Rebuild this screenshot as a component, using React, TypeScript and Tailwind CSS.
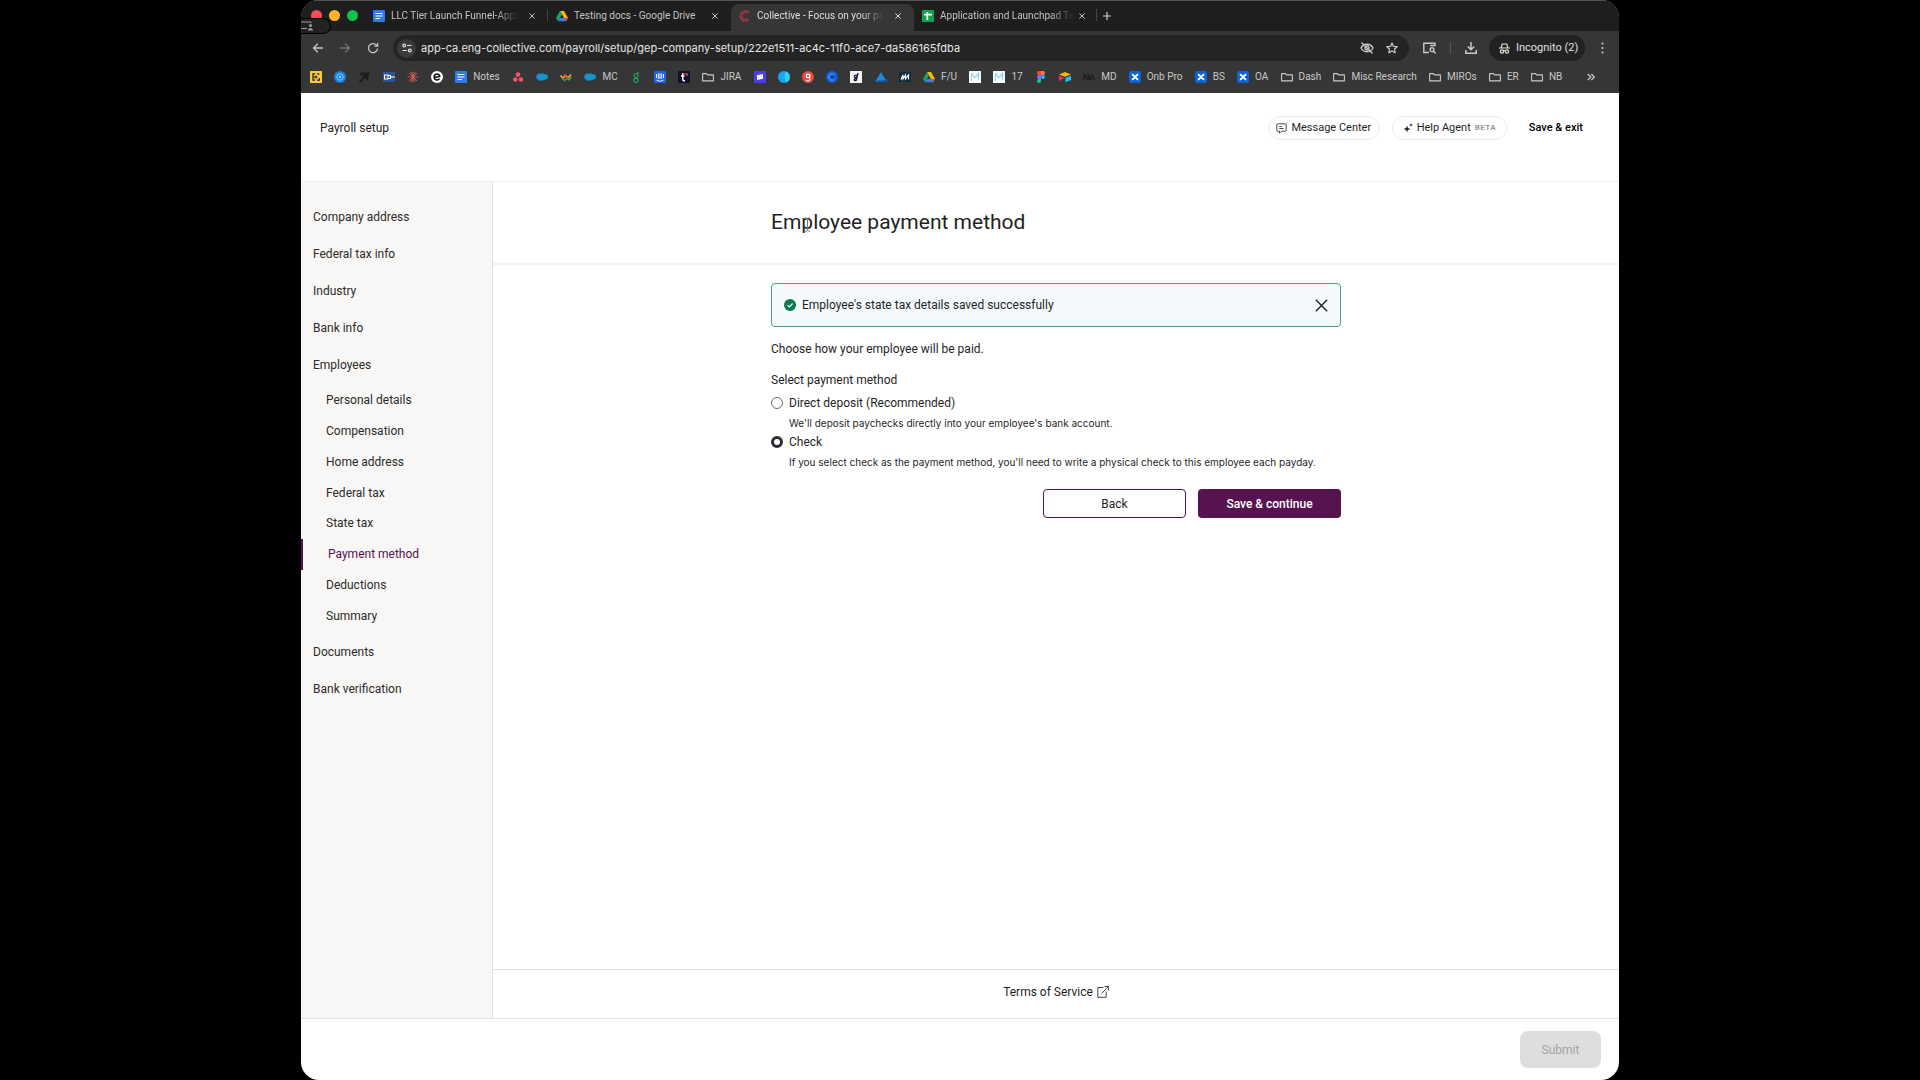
import React, { useState } from 'react';

type IconName =
  | 'docs' | 'gold' | 'atom' | 'arrow' | 'plug' | 'burst' | 'e' | 'asana' | 'cloud' | 'waves' | 'g' | 'intercom' | 't'
  | 'folder' | 'purple' | 'orb' | 'redg' | 'blueC' | 'script' | 'peak' | 'navy' | 'drive' | 'm' | 'figma' | 'box'
  | 'slashes' | 'xblue' | 'sheets' | 'collective';

const SmallIcon: React.FC<{ name: IconName }> = ({ name }) => {
  const shapes: Record<IconName, React.ReactNode> = {
    docs: (
      <>
        <rect width="12" height="12" rx="1" fill="#2f7de1" />
        <path d="M2.5 3.5h7M2.5 6h7M2.5 8.5h4.5" stroke="#fff" strokeWidth="1.2" />
      </>
    ),
    gold: (
      <>
        <rect width="12" height="12" fill="#f6c83c" />
        <path d="M5 2.8H3v6.4h2M7 2.8h2.4M7 9.2h2.4V7M3 6h4.5M6 4.5v3" stroke="#222" strokeWidth="1.2" fill="none" />
      </>
    ),
    atom: (
      <>
        <circle cx="6" cy="6" r="6" fill="#1682ea" />
        <circle cx="6" cy="6" r="3.2" stroke="#8fd0ff" strokeWidth="0.9" fill="none" />
        <circle cx="6" cy="6" r="1.2" fill="#9fd8ff" />
      </>
    ),
    arrow: <path d="M2.500 1.500h9l-2 8.500-2-3.500-4.500 5H.5l5.500-7-4.500-.5z" fill="#1c1c1c" />,
    plug: (
      <>
        <rect y="1" width="12" height="10" fill="#2b529c" />
        <path d="M1.5 4h3.5v4H1.5zM5 4.5h2.5v3H5M7.5 6H12" stroke="#fff" strokeWidth="1.1" fill="none" />
      </>
    ),
    burst: (
      <path d="M6 .5v11M.5 6h11M2 2l8 8M10 2 2 10M3.800.9l4.400 10.200M8.200.9 3.800 11.100" stroke="#e0654f" strokeWidth="0.8" />
    ),
    e: (
      <>
        <circle cx="6" cy="6" r="6" fill="#fff" />
        <path d="M3.3 6.4 8.8 5.4C8.4 3.6 7.3 3 6 3 4.300 3 3.200 4.300 3.200 6s1.100 3 2.900 3c1.100 0 2-.5 2.500-1.400" stroke="#111" strokeWidth="1.5" fill="none" />
      </>
    ),
    asana: (
      <>
        <circle cx="6" cy="3.600" r="2.300" fill="#f0566a" />
        <circle cx="3.300" cy="8.500" r="2.300" fill="#f0566a" />
        <circle cx="8.900" cy="8.500" r="2.300" fill="#f0566a" />
      </>
    ),
    cloud: <path d="M1 4.200C1.500 2.300 4 2 5 3c1-1 2.800-.8 3.400.3C10.500 2.800 12 4.200 12 6S10.500 8.600 9 8.400C8 9.600 6.500 9.500 6 9 5 10.500 3 10.300 2.500 8.600.5 8.500-.5 5.500 1 4.200z" fill="#1593d2" />,
    waves: (
      <>
        <path d="M.5 4.500 3 7l2.500-2.500L8 7l3-3.500" stroke="#f2a33a" strokeWidth="1.700" fill="none" />
        <path d="M2 7l2.500 2.500L7 7l2 2 2.500-3" stroke="#2fa866" strokeWidth="1.500" fill="none" />
        <path d="M4 3.500 8.500 8" stroke="#e5483f" strokeWidth="1.500" />
      </>
    ),
    g: (
      <>
        <circle cx="6" cy="4.500" r="2" stroke="#23a36a" strokeWidth="1.200" fill="none" />
        <circle cx="6" cy="9.300" r="2.200" stroke="#23a36a" strokeWidth="1.200" fill="none" />
        <path d="M7.500 3 8.500.8" stroke="#23a36a" strokeWidth="1.200" />
      </>
    ),
    intercom: (
      <>
        <rect width="12" height="12" rx="1.500" fill="#1f62f0" />
        <path d="M2.500 3v4M4.300 2.500v5.300M6 2.300v5.700M7.700 2.500v5.300M9.500 3v4M2.500 9c2 1.500 5 1.500 7 0" stroke="#fff" strokeWidth="0.900" fill="none" />
      </>
    ),
    t: (
      <>
        <rect width="12" height="12" rx="1" fill="#160d33" />
        <path d="M4.800 2v6.500c0 1 .8 1.400 2.200 1.200M3 5h3.500" stroke="#fff" strokeWidth="1.500" fill="none" />
        <path d="M6.500 2.800H9V5" stroke="#f0503c" strokeWidth="1.300" fill="none" />
      </>
    ),
    folder: <path d="M.6 2.600h3.800l1.200 1.300h5.800v6H.6z" stroke="#c9c9c9" strokeWidth="1.100" strokeLinejoin="round" fill="none" />,
    purple: (
      <>
        <rect width="12" height="12" fill="#4b3cf0" />
        <path d="M3 4.200 9 3v4.800L3 9z" fill="#fff" />
      </>
    ),
    orb: (
      <>
        <circle cx="6" cy="6" r="6" fill="#15a5f2" />
        <path d="M8 .5a6 6 0 0 1 1 10.700C6 9 6 4 8 .5z" fill="#2fd0ee" />
      </>
    ),
    redg: (
      <>
        <circle cx="6" cy="6" r="6" fill="#ee4742" />
        <circle cx="6" cy="4.900" r="1.700" stroke="#fff" strokeWidth="1.200" fill="none" />
        <path d="M7.800 3v5.200c0 2-2.900 2.200-3.700.8" stroke="#fff" strokeWidth="1.200" fill="none" />
      </>
    ),
    blueC: (
      <>
        <circle cx="6" cy="6" r="6" fill="#0d62d9" />
        <path d="M8.500 4.200A3.200 3.200 0 1 0 8.500 7.800" stroke="#5aa5ff" strokeWidth="1" fill="none" />
        <circle cx="6.300" cy="6" r="1.200" stroke="#0a2a5c" strokeWidth="1" fill="none" />
      </>
    ),
    script: (
      <>
        <rect width="12" height="12" fill="#f2f2f4" />
        <path d="M8 2 6.500 8.500c-.3 1.500-2.500 1.500-2.300.2.200-1 2-1.500 3.300-2M7 4.500c-1.500-.8-3 .3-2.500 1.500s1.800.6 2.500-.5" stroke="#14182c" strokeWidth="1.300" fill="none" />
      </>
    ),
    peak: (
      <>
        <path d="M6 1 12 11H0z" fill="#1f87e0" />
        <path d="M0 11c3-3 6 0 12-3v3z" fill="#0c58b0" />
      </>
    ),
    navy: (
      <>
        <rect y="1" width="12" height="10" fill="#0c2c42" />
        <path d="M2 8.500 4 4v4l2.500-4v4L9.500 4v4.500" stroke="#fff" strokeWidth="1.200" fill="none" />
      </>
    ),
    drive: (
      <>
        <path d="M4 1h4l4 7H8z" fill="#fbbc04" />
        <path d="M4 1 0 8l2 3.300L6 4.500z" fill="#1ea362" />
        <path d="M4 8h8l-2 3.300H2z" fill="#3d7cf0" />
        <path d="M10 11.300 12 8H9z" fill="#ea4335" />
      </>
    ),
    m: (
      <>
        <rect width="12" height="12" fill="#f5fafc" />
        <path d="M2.500 9.500v-7L6 6.500l3.500-4v7" stroke="#6db7d8" strokeWidth="1.200" strokeDasharray="1.200 .7" fill="none" />
      </>
    ),
    figma: (
      <>
        <path d="M6 0H4a2 2 0 0 0 0 4h2z" fill="#f24e1e" />
        <path d="M6 0h2a2 2 0 0 1 0 4H6z" fill="#ff7262" />
        <path d="M6 4H4a2 2 0 0 0 0 4h2z" fill="#a259ff" />
        <circle cx="8" cy="6" r="2" fill="#1abcfe" />
        <path d="M6 8H4a2 2 0 1 0 2 2z" fill="#0acf83" />
      </>
    ),
    box: (
      <>
        <path d="M0 3.500 6 1l6 2.500-6 2.300z" fill="#fcb400" />
        <path d="M6.500 6.800 12 4.700V9l-5.500 2.200z" fill="#18bfff" />
        <path d="M0 4.800 5.500 7 0 10z" fill="#f82b60" />
      </>
    ),
    slashes: <path d="M1 3l4 6M4.500 3l4 6M8 3l4 6M1 5v4M6 6v3" stroke="#1c1c1c" strokeWidth="1.400" />,
    xblue: (
      <>
        <rect width="12" height="12" rx="2" fill="#0b63d6" />
        <path d="M2.800 3.500C5 3.500 7 8.500 9.300 8.500M9.300 3.500C7 3.500 5 8.500 2.800 8.500" stroke="#fff" strokeWidth="1.900" fill="none" />
      </>
    ),
    sheets: (
      <>
        <rect width="12" height="12" rx="1" fill="#12a150" />
        <path d="M2.200 4.700h7.600M5.300 2v8" stroke="#fff" strokeWidth="1.700" />
      </>
    ),
    collective: (
      <>
        <path d="M9.700 2.600A4.800 4.800 0 1 0 9.700 9.400" stroke="#d6344f" strokeWidth="2" strokeDasharray="1.200 .6" fill="none" />
        <path d="M8.200 4A2.800 2.800 0 1 0 8.200 8" stroke="#d6344f" strokeWidth="1" strokeDasharray=".9 .6" fill="none" />
      </>
    ),
  };
  return (
    <svg className="h-3 w-3 shrink-0" viewBox="0 0 12 12" fill="none" aria-hidden="true">
      {shapes[name]}
    </svg>
  );
};

const tabs: { icon: IconName; title: string; active?: boolean; divider?: boolean; fade?: boolean }[] = [
  { icon: 'docs', title: 'LLC Tier Launch Funnel-Appl', divider: true, fade: true },
  { icon: 'drive', title: 'Testing docs - Google Drive' },
  { icon: 'collective', title: 'Collective - Focus on your pa', active: true, fade: true },
  { icon: 'sheets', title: 'Application and Launchpad Te', divider: true, fade: true },
];

const bookmarks: { icon: IconName; label?: string }[] = [
  { icon: 'gold' }, { icon: 'atom' }, { icon: 'arrow' }, { icon: 'plug' }, { icon: 'burst' }, { icon: 'e' },
  { icon: 'docs', label: 'Notes' }, { icon: 'asana' }, { icon: 'cloud' }, { icon: 'waves' },
  { icon: 'cloud', label: 'MC' }, { icon: 'g' }, { icon: 'intercom' }, { icon: 't' },
  { icon: 'folder', label: 'JIRA' }, { icon: 'purple' }, { icon: 'orb' }, { icon: 'redg' }, { icon: 'blueC' },
  { icon: 'script' }, { icon: 'peak' }, { icon: 'navy' }, { icon: 'drive', label: 'F/U' }, { icon: 'm' },
  { icon: 'm', label: '17' }, { icon: 'figma' }, { icon: 'box' }, { icon: 'slashes', label: 'MD' },
  { icon: 'xblue', label: 'Onb Pro' }, { icon: 'xblue', label: 'BS' }, { icon: 'xblue', label: 'OA' },
  { icon: 'folder', label: 'Dash' }, { icon: 'folder', label: 'Misc Research' }, { icon: 'folder', label: 'MIROs' },
  { icon: 'folder', label: 'ER' }, { icon: 'folder', label: 'NB' },
];

const steps: { label: string; children?: string[] }[] = [
  { label: 'Company address' },
  { label: 'Federal tax info' },
  { label: 'Industry' },
  { label: 'Bank info' },
  {
    label: 'Employees',
    children: ['Personal details', 'Compensation', 'Home address', 'Federal tax', 'State tax', 'Payment method', 'Deductions', 'Summary'],
  },
  { label: 'Documents' },
  { label: 'Bank verification' },
];

const methods = [
  { id: 'deposit', label: 'Direct deposit (Recommended)', hint: "We'll deposit paychecks directly into your employee's bank account." },
  { id: 'check', label: 'Check', hint: "If you select check as the payment method, you'll need to write a physical check to this employee each payday." },
];

const CloseIcon: React.FC<{ className: string }> = ({ className }) => (
  <svg className={className} viewBox="0 0 12 12" fill="none" stroke="currentColor" aria-hidden="true">
    <path d="M.8.8l10.400 10.400M11.200.8.8 11.200" />
  </svg>
);

const TabStrip = () => (
  <div className="flex h-[31px] bg-[#1e1e1e] pl-[10px] shadow-[inset_0_1px_0_#555]">
    <div className="flex w-[54px] shrink-0 items-center gap-[7px] pb-px">
      <span className="h-[11px] w-[11px] rounded-full bg-[#ff4b55]" />
      <span className="h-[11px] w-[11px] rounded-full bg-[#fdb32b]" />
      <span className="h-[11px] w-[11px] rounded-full bg-[#0fbf4f]" />
    </div>
    {tabs.map((tab) => (
      <div
        key={tab.title}
        className={`relative mt-1 flex w-[183px] shrink-0 items-center pr-2 pb-1 pl-2 ${tab.active ? 'rounded-t-lg bg-[#363636] text-[#dedede]' : 'text-[#c4c4c4]'}`}
      >
        <SmallIcon name={tab.icon} />
        <span className={`ml-[6px] text-[10px] leading-4 whitespace-nowrap ${tab.fade ? 'mask-r-from-82% mask-r-to-100%' : ''}`}>{tab.title}</span>
        <button type="button" aria-label={`Close ${tab.title}`} className="ml-auto flex h-4 w-4 items-center justify-center">
          <CloseIcon className="h-[6px] w-[6px] stroke-2" />
        </button>
        {tab.divider && <span className="absolute top-[5px] right-0 h-3 w-px bg-[#444]" />}
      </div>
    ))}
    <button type="button" aria-label="New tab" className="flex w-5 items-center justify-center text-[#d0d0d0]">
      <svg className="h-2 w-2" viewBox="0 0 8 8" stroke="currentColor" strokeWidth="1.200" aria-hidden="true">
        <path d="M4 0v8M0 4h8" />
      </svg>
    </button>
  </div>
);

const AddressBar = () => (
  <div className="flex h-[34px] items-center pr-[15px] pl-[11px] text-[#c9c9c9]">
    <button type="button" aria-label="Back" className="mr-[15px]">
      <svg className="h-3 w-3" viewBox="0 0 12 12" fill="none" stroke="currentColor" strokeWidth="1.300" aria-hidden="true"><path d="M11 6H1.800M5.800 1.700 1.500 6l4.300 4.300" /></svg>
    </button>
    <button type="button" aria-label="Forward" className="mr-4 text-[#757575]">
      <svg className="h-3 w-3" viewBox="0 0 12 12" fill="none" stroke="currentColor" strokeWidth="1.300" aria-hidden="true"><path d="M1 6h9.200M6.200 1.700 10.500 6l-4.300 4.300" /></svg>
    </button>
    <button type="button" aria-label="Reload" className="mr-[14px]">
      <svg className="h-3 w-3" viewBox="0 0 12 12" fill="none" stroke="currentColor" strokeWidth="1.300" aria-hidden="true"><path d="M10.500 6.500A4.500 4.500 0 1 1 9.200 2.900L10.500 4M10.600 1v3.200H7.400" /></svg>
    </button>
    <div className="flex h-[26px] flex-1 items-center rounded-full bg-[#242424] pr-[11px] pl-1">
      <span className="mr-[5px] flex h-[19px] w-[19px] items-center justify-center rounded-full bg-[#3a3a3a]">
        <svg className="h-[10px] w-[10px]" viewBox="0 0 10 10" fill="none" stroke="#e0e0e0" strokeWidth="1.200" aria-hidden="true"><path d="M5 2.500h4.500M.5 7.500H5" /><circle cx="2.200" cy="2.500" r="1.400" /><circle cx="7.800" cy="7.500" r="1.400" /></svg>
      </span>
      <input
        aria-label="Address"
        className="h-5 min-w-0 flex-1 bg-transparent font-['Inter',sans-serif] text-[11px] text-[#e6e6e6] outline-none"
        defaultValue="app-ca.eng-collective.com/payroll/setup/gep-company-setup/222e1511-ac4c-11f0-ace7-da586165fdba"
      />
      <svg className="mr-3 h-[14px] w-[14px]" viewBox="0 0 14 14" fill="none" stroke="currentColor" strokeWidth="1.300" aria-hidden="true"><path d="M1 7c2.500-5 9.500-5 12 0-2.500 5-9.500 5-12 0zM1.500 1.500l11 11" /><circle cx="7" cy="7" r="2" /></svg>
      <svg className="h-3 w-3" viewBox="0 0 12 12" fill="none" stroke="currentColor" strokeWidth="1.200" strokeLinejoin="round" aria-hidden="true"><path d="m6 1 1.500 3.400 3.700.3-2.800 2.500.8 3.600L6 8.900l-3.200 1.900.8-3.600L.8 4.700l3.700-.3z" /></svg>
    </div>
    <svg className="ml-[14px] h-3 w-[13px]" viewBox="0 0 13 12" fill="none" stroke="currentColor" strokeWidth="1.400" aria-hidden="true"><path d="M6 10.500H3M12 4.300v-3H.8v9.200H5" /><path d="M7 3.500h5" /><circle cx="9" cy="7.700" r="1.900" /><path d="m10.400 9.200 2.200 2.300" /></svg>
    <span className="mx-[14px] h-3 w-px bg-[#585858]" />
    <svg className="mr-3 h-3 w-3" viewBox="0 0 12 12" fill="none" stroke="currentColor" strokeWidth="1.500" aria-hidden="true"><path d="M6 0v7.500M2.800 4.500 6 7.700l3.200-3.200M.8 8v3.200h10.400V8" /></svg>
    <div className="flex h-[26px] w-24 items-center gap-[6px] rounded-full bg-[#222] pl-[10px] text-[11px] whitespace-nowrap text-[#e0e0e0]">
      <svg className="h-[11px] w-[11px]" viewBox="0 0 11 11" fill="none" stroke="currentColor" strokeWidth="1.200" aria-hidden="true"><path d="M0 5h11M2.300 4.700 3.200 1h4.600l.9 3.700M4.700 8.200c.5-.5 1.100-.5 1.600 0" /><circle cx="3" cy="8.500" r="1.600" /><circle cx="8" cy="8.500" r="1.600" /></svg>
      Incognito (2)
    </div>
    <button type="button" aria-label="Menu" className="ml-4">
      <svg className="h-3 w-[3px]" viewBox="0 0 3 12" fill="currentColor" aria-hidden="true"><circle cx="1.500" cy="1.500" r="1.100" /><circle cx="1.500" cy="6" r="1.100" /><circle cx="1.500" cy="10.500" r="1.100" /></svg>
    </button>
  </div>
);

const BookmarksBar = () => (
  <div className="flex h-7 items-start justify-between pt-1 pr-6 pl-[9px] text-[10px] leading-4 text-[#c9c9c9]">
    {bookmarks.map((b, i) => (
      <a key={i} href="#" aria-label={b.label ? undefined : b.icon} className="flex h-4 items-center gap-[6px] whitespace-nowrap">
        <SmallIcon name={b.icon} />
        {b.label}
      </a>
    ))}
    <button type="button" aria-label="More bookmarks" className="ml-3 flex h-4 items-center">
      <svg className="h-2 w-2" viewBox="0 0 8 8" fill="none" stroke="currentColor" strokeWidth="1.200" aria-hidden="true"><path d="m.8 1 3 3-3 3M4.300 1l3 3-3 3" /></svg>
    </button>
  </div>
);

const Sidebar = () => (
  <nav className="w-48 shrink-0 border-r border-[#e2e1e0] bg-[#f8f7f5] pt-4 text-xs text-[#2b2b2b]">
    <ul>
      {steps.map((step) => (
        <li key={step.label}>
          <a href="#" className="flex h-[37px] items-center pl-3">{step.label}</a>
          {step.children && (
            <ul className="my-[2px] flex h-[246px] flex-col">
              {step.children.map((child) => (
                <li key={child} className="flex flex-1">
                  <a
                    href="#"
                    className={`flex flex-1 items-center pl-[25px] ${child === 'Payment method' ? 'border-l-2 border-[#57134f] text-[#57134f]' : ''}`}
                  >
                    {child}
                  </a>
                </li>
              ))}
            </ul>
          )}
        </li>
      ))}
    </ul>
  </nav>
);

const App: React.FC = () => {
  const [method, setMethod] = useState('check');
  const [showAlert, setShowAlert] = useState(true);

  return (
    <div className="min-h-screen bg-black px-[301px] font-['Roboto',sans-serif]">
      <div className="relative flex min-h-screen flex-col overflow-hidden rounded-[18px] bg-white">
        <div className="bg-[#363636]">
          <TabStrip />
          <AddressBar />
          <BookmarksBar />
        </div>
        {/* screen sharing indicator */}
        <div className="absolute top-[18px] left-0 flex h-4 w-[30px] items-center rounded-r-full border border-l-0 border-black bg-[#222]">
          <svg className="h-[10px] w-3" viewBox="0 0 12 10" fill="none" stroke="#999" aria-hidden="true"><path d="M0 1h10v1M0 7.500h6" /><circle cx="9.500" cy="4.500" r="1.500" fill="#999" stroke="none" /><path d="M7 9.500c0-3.500 5-3.500 5 0z" fill="#999" stroke="none" /></svg>
        </div>

        <div className="flex flex-1 flex-col text-[#1f1f1f]">
          <header className="flex h-[89px] items-start justify-between border-b border-[#f1f0ee] pt-[23px] pr-9 pl-[19px]">
            <h2 className="text-xs leading-6">Payroll setup</h2>
            <div className="flex items-center text-[11px]">
              <button type="button" className="mr-3 flex h-6 w-28 items-center justify-center gap-1 rounded-full border border-[#ebebeb]">
                <svg className="h-[11px] w-[11px]" viewBox="0 0 11 11" fill="none" stroke="#333" strokeWidth="0.900" aria-hidden="true"><path d="M1.500.8h8c.4 0 .7.3.7.7v6c0 .4-.3.7-.7.7H5.500l-2 2v-2h-2c-.4 0-.7-.3-.7-.7v-6c0-.4.3-.7.7-.7zM3.200 3.500h2.500M3.200 5.500h4.500" /></svg>
                Message Center
              </button>
              <button type="button" className="mr-[22px] flex h-6 w-[115px] items-center justify-center gap-1 rounded-full border border-[#ebebeb]">
                <svg className="h-[10px] w-[10px]" viewBox="0 0 10 10" fill="#222" aria-hidden="true"><path d="M4 2.500 4.900 5.100 7.500 6l-2.600.9L4 9.500l-.9-2.600L.5 6l2.600-.9zM8 0l.5 1.500L10 2l-1.500.5L8 4l-.5-1.500L6 2l1.500-.5z" /></svg>
                Help Agent
                <span className="text-[8px] font-bold tracking-wider text-[#9a9a9a]">BETA</span>
              </button>
              <button type="button" className="font-medium text-black">Save &amp; exit</button>
            </div>
          </header>

          <div className="flex flex-1">
            <Sidebar />
            <main className="flex flex-1 flex-col">
              <div className="h-[83px] border-b-2 border-[#f3f2f1] pt-6">
                <h1 className="mx-auto w-[570px] text-[21px] leading-8">Employee payment method</h1>
              </div>
              <div className="mx-auto w-[570px] flex-1 pt-[18px] text-xs leading-4">
                {showAlert && (
                  <div role="status" className="flex h-11 items-center rounded-sm border border-[#4aa07e] bg-[#f4fafb] pr-3 pl-3">
                    <svg className="mr-[6px] h-3 w-3" viewBox="0 0 12 12" fill="none" aria-hidden="true"><circle cx="6" cy="6" r="6" fill="#0a7a50" /><path d="m3.500 6.200 1.800 1.800 3.300-3.500" stroke="#fff" strokeWidth="1.100" /></svg>
                    <span className="flex-1">Employee's state tax details saved successfully</span>
                    <button type="button" aria-label="Dismiss" onClick={() => setShowAlert(false)}>
                      <CloseIcon className="h-[13px] w-[13px] stroke-[1.3]" />
                    </button>
                  </div>
                )}
                <p className="mt-[14px]">Choose how your employee will be paid.</p>
                <fieldset className="mt-[15px]">
                  <legend>Select payment method</legend>
                  <div className="mt-[7px] flex flex-col">
                    {methods.map((m) => (
                      <div key={m.id} className="flex h-[39px] items-start gap-[6px]">
                        <input
                          id={m.id}
                          type="radio"
                          name="method"
                          checked={method === m.id}
                          onChange={() => setMethod(m.id)}
                          className="mt-[2px] h-3 w-3 shrink-0 appearance-none rounded-full border border-[#6b6b6b] checked:border-[3px] checked:border-[#2c2c35]"
                        />
                        <label htmlFor={m.id} className="whitespace-nowrap">
                          {m.label}
                          <span className="mt-1 block font-['Inter',sans-serif] text-[10px] leading-4">{m.hint}</span>
                        </label>
                      </div>
                    ))}
                  </div>
                </fieldset>
                <div className="mt-4 flex justify-end gap-3">
                  <button type="button" className="h-[29px] w-[143px] rounded border border-[#57134f]">Back</button>
                  <button type="button" className="h-[29px] w-[143px] rounded bg-[#57134f] font-medium text-white">Save &amp; continue</button>
                </div>
              </div>
              <footer className="flex h-[49px] items-center justify-center border-t border-[#e2e1e0] pb-1 text-xs">
                <a href="#" className="flex items-center gap-1">
                  Terms of Service
                  <svg className="h-3 w-3" viewBox="0 0 12 12" fill="none" stroke="#333" strokeWidth="0.900" aria-hidden="true"><path d="M6.500 1.500H.8v9.800h8.400V5.500M4.500 7.500l6.800-7M7.500.5h3.900v4" /></svg>
                </a>
              </footer>
            </main>
          </div>

          <div className="flex h-[62px] items-start justify-end border-t border-[#e2e1e0] pt-3 pr-[18px]">
            <button type="button" disabled className="h-[37px] w-[81px] rounded-lg bg-[#dedede] text-xs text-[#a3a3a3]">Submit</button>
          </div>
        </div>
        {/* text cursor resting on the heading */}
        <svg className="pointer-events-none absolute top-[217px] left-[503px] h-[15px] w-[7px]" viewBox="0 0 7 15" fill="none" stroke="#777" aria-hidden="true"><path d="M1 .8c1.500 0 2.500.5 2.500 1.500v10.400c0 1-1 1.500-2.500 1.500M6 .8C4.500.8 3.500 1.300 3.500 2.300M6 14.200c-1.500 0-2.500-.5-2.500-1.500" /></svg>
      </div>
    </div>
  );
};

export default App;
